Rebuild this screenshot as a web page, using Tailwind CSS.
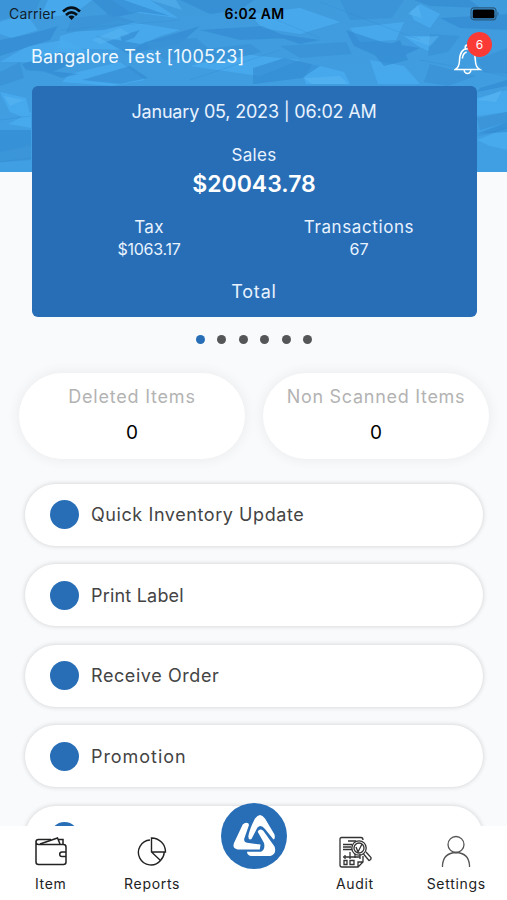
<!DOCTYPE html>
<html lang="en">
<head>
    <meta charset="UTF-8">
    <meta name="viewport" content="width=device-width, initial-scale=1.0">
    <title>Store Dashboard</title>
    <script src="https://cdn.jsdelivr.net/npm/@tailwindcss/browser@4"></script>
</head>
<body class="bg-[#f8fafc] font-['Inter',sans-serif]">
    <div class="relative w-[507px] h-[900px] overflow-hidden flex flex-col">
        <!-- Low-poly header background -->
        <svg class="absolute left-0 top-0 -z-10" width="507" height="172" viewBox="0 0 507 172">
            <defs>
                <linearGradient id="sky" x1="0" y1="0" x2="0" y2="1">
                    <stop offset="0" stop-color="#409bdd"/>
                    <stop offset="1" stop-color="#409fe3"/>
                </linearGradient>
            </defs>
            <rect width="507" height="172" fill="url(#sky)"/>
            <g fill="#49acef" fill-opacity=".85">
                <path d="M48 0 92 0 74 14 40 18zM0 22 26 14 38 30 12 38 0 34zM60 36 118 20 180 30 160 36 130 50 58 48zM112 0 150 0 178 18 130 12z"/>
                <path d="M0 62 28 46 64 40 88 52 30 62zM70 74 120 62 145 80 112 86 62 82zM0 92 26 98 31 120 10 112zM8 124 31 112 31 128zM190 66 240 54 300 60 260 76z"/>
                <path d="M250 14 300 8 340 22 300 34 262 28zM410 12 420 4 440 14 430 28 414 20zM404 36 440 36 428 51 418 46zM350 28 404 22 396 40 360 42zM304 78 312 64 344 72 350 84 306 84zM370 60 404 66 420 84 378 84zM477 98 507 90 507 112 477 116zM477 140 507 128 507 150 490 146z"/>
            </g>
            <g fill="#3289cf" fill-opacity=".6">
                <path d="M92 0 124 0 170 16 140 12 112 18zM0 40 30 34 58 26 50 40 0 56zM96 36 140 44 200 26 180 44 128 54zM22 64 60 52 86 58 52 72 26 70zM82 80 130 66 148 78 120 84zM40 70 78 74 62 78zM120 36 140 30 134 38 122 42z"/>
                <path d="M180 0 254 0 240 10 210 14zM200 30 262 26 290 38 240 40zM264 32 320 40 300 44zM253 68 284 58 320 66 302 78 253 84zM346 30 382 42 420 48 390 62 354 46zM414 0 470 0 480 8 430 6zM440 18 507 14 507 30 460 28zM372 52 400 40 408 60 384 66zM480 88 507 80 507 86 477 92zM477 134 507 122 507 132zM0 130 31 130 31 146 0 152z"/>
            </g>
            <g fill="#3992d6" fill-opacity=".8">
                <path d="M0 0 40 0 36 10 0 20zM72 18 110 14 136 22 104 30 66 32zM144 42 196 38 220 58 164 60zM0 72 20 62 24 78 0 86zM0 152 31 144 31 160 0 162zM340 0 404 0 392 18 350 20z"/>
                <path d="M280 46 346 42 352 54 300 58zM430 34 460 36 448 52 428 56zM477 60 507 48 507 74 484 72zM477 118 507 112 507 122 480 130zM430 64 476 76 448 86 424 82zM180 52 250 44 262 52 210 64z"/>
            </g>
            <g fill="#5cb8f5" fill-opacity=".45">
                <path d="M408 14 418 5 422 18zM304 78 340 76 348 84 312 84zM408 38 439 36 430 46zM92 40 120 28 130 34 100 44zM477 100 502 90 496 102zM4 96 24 100 10 106zM150 0 176 0 182 10z"/>
            </g>
            <path d="M0 120 31 116M0 162 31 158M477 136 507 128M60 30 180 20M258 12 320 38M320 2 420 40M420 60 507 76M190 80 280 50" stroke="#2f84ca" stroke-opacity=".25" fill="none"/>
        </svg>

        <!-- Status bar -->
        <div class="grid grid-cols-3 items-center h-[27px] pl-[9px] pr-[7px] text-[#10202d]">
            <div class="flex items-center gap-[6px]">
                <span class="text-[14px] tracking-[0.15px]">Carrier</span>
                <svg width="19" height="15" viewBox="0 0 19 15" fill="none" stroke="#071018" stroke-width="2.7">
                    <path d="M1 5.4Q9.5-2.3 18 5.4"/>
                    <path d="M4 8.9Q9.5 3.9 15 8.9"/>
                    <path d="M9.5 14 6.4 10.8Q9.5 8.3 12.6 10.8z" fill="#071018" stroke="none"/>
                </svg>
            </div>
            <span class="text-center font-semibold text-[14px] tracking-[0.3px] text-black">6:02 AM</span>
            <svg class="justify-self-end" width="30" height="14" viewBox="0 0 30 14">
                <rect x="1" y=".8" width="25" height="12" rx="3" fill="none" stroke="#2a5b81" stroke-width="1.2"/>
                <rect x="2.7" y="2.4" width="21.7" height="8.9" rx="1.5"/>
                <path d="M27.5 4.5q2 2.2 0 4.4z" fill="#2a5b81"/>
            </svg>
        </div>

        <!-- Title bar -->
        <header class="flex justify-between h-[59px] pl-[31px] pr-[14px]">
            <h1 class="mt-[18px] text-[18px] leading-6 tracking-[0.23px] text-[#eef8ff] whitespace-nowrap">Bangalore Test [100523]</h1>
            <div class="relative w-[39px]">
                <svg class="mt-[16px]" width="28" height="34" viewBox="0 0 30 34" preserveAspectRatio="none" fill="none" stroke="white" stroke-width="1.6">
                    <path d="M12 5.8V4.5a2.4 2.4 0 0 1 4.8 0v1.3M1.500 26.500Q5.5 24 5.8 18.5C6 10 9 5.8 14.4 5.8S22.8 10 23 18.5Q23.3 24 27.500 26.500z"/>
                    <path d="M11 27a3.5 3.5 0 0 0 7 0M9 15.5Q9.5 10 13.5 9"/>
                </svg>
                <span class="absolute left-[13px] top-[5px] flex items-center justify-center size-[25px] rounded-full bg-[#fb3a36] text-[12px] text-white">6</span>
            </div>
        </header>

        <!-- Sales card -->
        <section class="w-[445px] h-[231px] ml-[31.5px] pt-[13px] rounded-[6px] bg-[#286eb6] text-center text-[17px] leading-[22px] text-[#e8f3ff]">
            <p class="text-[18px] leading-[26px] tracking-[-0.2px]">January 05, 2023 | 06:02 AM</p>
            <p class="mt-[19px] tracking-[0.3px]">Sales</p>
            <p class="mt-[2px] text-[23px] leading-8 font-semibold text-white">$20043.78</p>
            <div class="grid grid-cols-2 w-[420px] mx-auto mt-4">
                <div>
                    <p class="tracking-[0.3px]">Tax</p>
                    <p class="text-[16px] tracking-[-0.25px]">$1063.17</p>
                </div>
                <div>
                    <p class="tracking-[0.6px]">Transactions</p>
                    <p class="text-[16px]">67</p>
                </div>
            </div>
            <p class="mt-[19px] text-[18px] leading-[26px] tracking-[0.8px]">Total</p>
        </section>

        <!-- Carousel dots -->
        <div class="flex justify-center gap-[12.6px] mt-[18px] ml-px">
            <span class="size-[9px] rounded-full bg-[#286eb6]"></span>
            <span class="size-[9px] rounded-full bg-[#555657]"></span>
            <span class="size-[9px] rounded-full bg-[#555657]"></span>
            <span class="size-[9px] rounded-full bg-[#555657]"></span>
            <span class="size-[9px] rounded-full bg-[#555657]"></span>
            <span class="size-[9px] rounded-full bg-[#555657]"></span>
        </div>

        <!-- Counters -->
        <div class="flex gap-[18px] mt-[29px] ml-[19px] text-center">
            <div class="w-[226px] h-[86px] pt-[12px] rounded-full bg-white shadow-[0_0_14px_rgba(0,0,0,0.07)]">
                <p class="text-[18px] leading-6 tracking-[0.78px] text-[#b3b3b3]">Deleted Items</p>
                <p class="mt-3 text-[19px] leading-6 text-black">0</p>
            </div>
            <div class="w-[226px] h-[86px] pt-[12px] rounded-full bg-white shadow-[0_0_14px_rgba(0,0,0,0.07)]">
                <p class="text-[18px] leading-6 tracking-[0.7px] text-[#b3b3b3]">Non Scanned Items</p>
                <p class="mt-3 text-[19px] leading-6 text-black">0</p>
            </div>
        </div>

        <!-- Actions -->
        <div class="flex flex-col gap-[18.6px] mt-[24.5px] ml-[25px] w-[458px] h-[342.5px] text-[18px] tracking-[0.58px] text-[#444]">
            <div class="flex items-center shrink-0 gap-3 h-[62px] pl-[25px] rounded-full bg-white shadow-[0_0_5px_rgba(0,0,0,0.18)]">
                <span class="size-[29px] rounded-full bg-[#286eb6]"></span>
                <span>Quick Inventory Update</span>
            </div>
            <div class="flex items-center shrink-0 gap-3 h-[62px] pl-[25px] rounded-full bg-white shadow-[0_0_5px_rgba(0,0,0,0.18)]">
                <span class="size-[29px] rounded-full bg-[#286eb6]"></span>
                <span class="tracking-[0.2px]">Print Label</span>
            </div>
            <div class="flex items-center shrink-0 gap-3 h-[62px] pl-[25px] rounded-full bg-white shadow-[0_0_5px_rgba(0,0,0,0.18)]">
                <span class="size-[29px] rounded-full bg-[#286eb6]"></span>
                <span>Receive Order</span>
            </div>
            <div class="flex items-center shrink-0 gap-3 h-[62px] pl-[25px] rounded-full bg-white shadow-[0_0_5px_rgba(0,0,0,0.18)]">
                <span class="size-[29px] rounded-full bg-[#286eb6]"></span>
                <span class="tracking-[0.95px]">Promotion</span>
            </div>
            <div class="flex items-center shrink-0 gap-3 h-[62px] pl-[25px] rounded-full bg-white shadow-[0_0_5px_rgba(0,0,0,0.18)]">
                <span class="size-[29px] rounded-full bg-[#286eb6]"></span>
            </div>
        </div>

        <!-- Tab bar -->
        <nav class="relative z-10 grid grid-cols-5 shrink-0 h-[74px] bg-white text-[14px] leading-5 tracking-[0.7px] text-[#222]">
            <a class="flex flex-col items-center pt-[9px]">
                <svg width="34" height="34" viewBox="0 0 34 34" fill="none" stroke="#222" stroke-width="1.5">
                    <path d="M2 6v21q0 2.500 2.500 2.500h25q2.500 0 2.500-2.500V12q0-2.500-2.500-2.500H4.500Q2 9.500 2 7T4.500 4.500H17"/>
                    <path d="M6 9 23.500 3l2.500 6M24.500 4.500H29V9.500M32 17h-4a2.300 2.300 0 0 0 0 4.600h4"/>
                </svg>
                <span class="mt-[5px]">Item</span>
            </a>
            <a class="flex flex-col items-center pt-[9px]">
                <svg width="34" height="34" viewBox="0 0 34 34" fill="none" stroke="#222" stroke-width="1.4">
                    <path d="M15 5A12.500 12.500 0 1 0 25.500 25.500L16.500 17V3A14 14 0 0 1 30.500 17H16.500M25.500 25.500Q29 22 29.300 17"/>
                </svg>
                <span class="mt-[5px]">Reports</span>
            </a>
            <div class="flex justify-center">
                <svg class="-mt-[23px] ml-px size-[66px]" viewBox="0 0 66 66">
                    <circle cx="33" cy="33" r="33" fill="#286eb6"/>
                    <g fill="white">
                        <path d="M27.300 33.500Q28.500 26 34 15.500Q39 8.500 44 15.500L53.500 31.500Q54.500 36 52.500 36.500L44 26Q39.700 20.500 36.300 24.700L30.500 36Q27.500 37.500 27.300 33.500z"/>
                        <path d="M21.700 21.500Q24.500 18.500 27.300 20.300L28 22 23.300 35.500Q22.500 39 26 39.700L39.500 41.500 38.800 46.500H16.500Q11 45.500 13 40z"/>
                        <path d="M36.700 28.700Q38.500 25 42.300 27.700L53.500 43.500Q56 51 49.500 53H30Q26 52 26 48.700H40Q44.500 46.500 43 40z"/>
                    </g>
                </svg>
            </div>
            <a class="flex flex-col items-center pt-[9px]">
                <svg width="34" height="34" viewBox="0 0 34 34" fill="none" stroke="#333" stroke-width="1.3">
                    <path d="M23 2.500H3.500Q2 2.500 2 4V30q0 2 2 2H20l5-5V21M20 32v-5h5M23 2.500Q25 2.500 25 5"/>
                    <path d="M10 6h8M5 9.500h9M5 12h8M5 14.500h9" stroke-width="1.5"/>
                    <circle cx="21" cy="13" r="7.200"/>
                    <circle cx="21" cy="13" r="5"/>
                    <path d="m18 12 2 5 4-8M25.500 19l5.500 6.500q2.500-.5 2-3L28 17M5 22h17M7 20v4M12 17v7M17 19v4M6 25.500h3v4H6zM12 25.500h4v4h-4zM22 19v5"/>
                </svg>
                <span class="mt-[5px]">Audit</span>
            </a>
            <a class="flex flex-col items-center pt-[9px]">
                <svg width="34" height="34" viewBox="0 0 34 34" fill="none" stroke="#555" stroke-width="1.3">
                    <circle cx="17" cy="9.500" r="8"/>
                    <path d="M3.500 32V30Q4.500 18 17 17.500 29.500 18 30.500 30v2"/>
                </svg>
                <span class="mt-[5px]">Settings</span>
            </a>
        </nav>
    </div>
</body>
</html>
